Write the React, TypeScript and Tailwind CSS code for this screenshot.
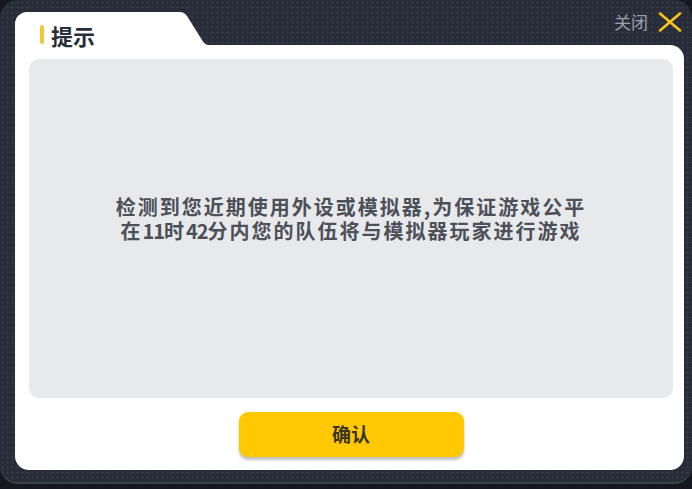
import React from 'react';

const CloseIcon: React.FC = () => (
  <svg width="24" height="20" viewBox="0 0 24 20" fill="none">
    <path d="M2 1.5L22 18.5M22 1.5L2 18.5" stroke="#f5c518" strokeWidth="2.6" strokeLinecap="round" />
  </svg>
);

// curved slanted edge on the right of the title tab
const TabEdge: React.FC = () => (
  <svg width="30" height="33" viewBox="0 0 30 33" className="block">
    <path d="M0 0 L2 0 Q6 0 9 4 L24 28 Q27 33 31 33 L0 33 Z" fill="#ffffff" />
  </svg>
);

const App: React.FC = () => {
  return (
    <div
      className="w-[692px] h-[489px] bg-[#17181f] overflow-hidden"
      style={{ fontFamily: '"Noto Sans CJK SC", "Noto Sans", sans-serif' }}
    >
      <div className="h-[484px] rounded-[18px] border-b-[2px] border-[#3a404d] bg-[#272c38] bg-[image:radial-gradient(#323846_1px,transparent_1.3px)] bg-size-[5px_5px] pt-[12px] pl-[15px]">
        <div className="w-[667px] h-[33px] flex items-start">
          <div className="w-[163px] h-[33px] bg-white rounded-tl-[12px] flex items-start gap-[7px] pl-[25px] pt-[13px]">
            <div className="w-[4px] h-[19px] rounded-[2px] bg-[#f2c832]" />
            <span className="text-[22px] leading-[21px] font-bold text-[#2a2e3a]">提示</span>
          </div>
          <TabEdge />
          <div className="flex-1" />
          <button className="h-[18px] mt-[1px] flex items-center gap-[10px]">
            <span className="text-[17px] leading-[18px] text-[#9aa0aa]">关闭</span>
            <CloseIcon />
          </button>
        </div>

        <div className="w-[669px] h-[425px] bg-white rounded-tr-[14px] rounded-b-[14px] pt-[14px] pl-[14px] pr-[11px]">
          <div className="h-[339px] rounded-[10px] bg-[#e8e9ea] flex flex-col items-center justify-center pb-[20px] text-[20px] leading-[24px] tracking-[2px] font-bold text-[#4c5059]">
            <div>检测到您近期使用外设或模拟器,为保证游戏公平</div>
            <div>
              在<span className="tracking-[-1px]">11</span>时<span className="tracking-[-1px]">42</span>分内您的队伍将与模拟器玩家进行游戏
            </div>
          </div>
          <div className="flex justify-center mt-[14px]">
            <button className="w-[225px] h-[45px] rounded-[9px] bg-[#ffc800] shadow-[0_3px_3px_rgba(0,0,0,0.25)] text-[19px] font-bold text-[#3b3422]">
              确认
            </button>
          </div>
        </div>
      </div>
    </div>
  );
};

export default App;
